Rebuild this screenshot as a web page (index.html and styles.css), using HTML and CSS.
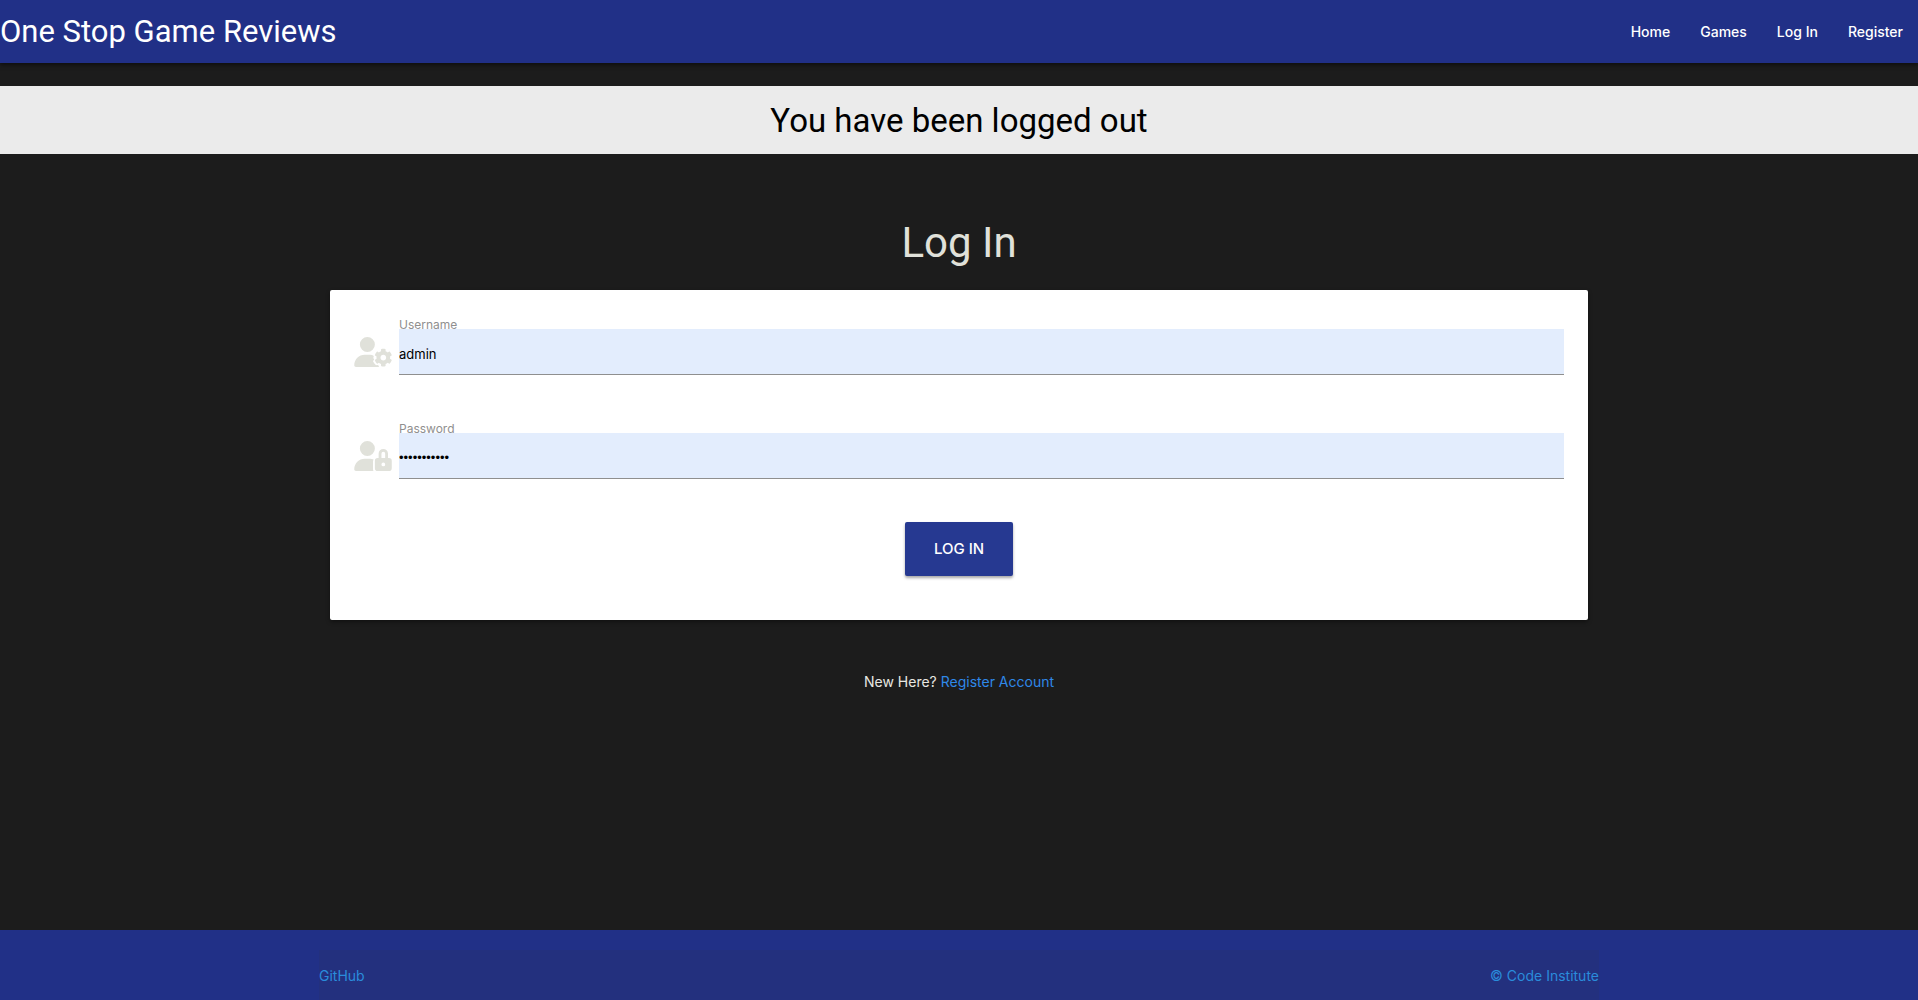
FILE: index.html
```html
<!DOCTYPE html>
<html lang="en">
<head>
<meta charset="utf-8">
<meta name="viewport" content="width=device-width, initial-scale=1">
<title>One Stop Game Reviews</title>
<link rel="stylesheet" href="styles.css">
</head>
<body>
<header class="navbar">
  <a class="brand" href="#">One Stop Game Reviews</a>
  <nav class="nav-links">
    <a href="#">Home</a>
    <a href="#">Games</a>
    <a href="#">Log In</a>
    <a href="#">Register</a>
  </nav>
</header>
<section class="flash"><h4 class="flash-text">You have been logged out</h4></section>
<main class="content">
  <h3 class="title">Log In</h3>
  <form class="card">
    <div class="field">
      <svg class="icon" viewBox="0 0 640 512" aria-hidden="true"><path d="M224 256A128 128 0 1 0 224 0a128 128 0 1 0 0 256zm-45.700 48C79.800 304 0 383.800 0 482.300C0 498.700 13.300 512 29.700 512H412C422 508 425 500 420 490L395 478C375 485 362 475 350 460C335 440 320 425 322 410C325 400 336 395 342 386C325 370 322 350 335 325C316 311 293 304 269.700 304z"/><path fill-rule="evenodd" d="M610.500 373.300c2.600-14.100 2.600-28.500 0-42.600l25.800-14.900c3-1.700 4.300-5.200 3.300-8.500-6.700-21.600-18.200-41.200-33.200-57.400-2.300-2.500-6-3.100-9-1.400l-25.800 14.900c-10.900-9.300-23.400-16.500-36.900-21.300v-29.800c0-3.400-2.400-6.400-5.700-7.100-22.300-5-45-4.800-66.200 0-3.300.7-5.700 3.700-5.700 7.100v29.800c-13.500 4.800-26 12-36.900 21.300l-25.800-14.900c-2.900-1.700-6.700-1.100-9 1.400-15 16.200-26.500 35.800-33.200 57.400-1 3.300.4 6.800 3.300 8.500l25.800 14.900c-2.600 14.100-2.600 28.500 0 42.600l-25.800 14.900c-3 1.700-4.300 5.200-3.300 8.500 6.700 21.600 18.200 41.100 33.200 57.400 2.300 2.500 6 3.100 9 1.400l25.800-14.900c10.900 9.300 23.400 16.500 36.900 21.300v29.800c0 3.400 2.400 6.400 5.700 7.100 22.300 5 45 4.800 66.200 0 3.300-.7 5.700-3.700 5.700-7.100v-29.800c13.500-4.800 26-12 36.900-21.300l25.800 14.900c2.900 1.700 6.700 1.100 9-1.400 15-16.200 26.500-35.800 33.200-57.400 1-3.300-.4-6.800-3.300-8.500l-25.800-14.900zM496 400.500c-26.800 0-48.500-21.800-48.500-48.500s21.800-48.500 48.500-48.500 48.500 21.800 48.500 48.500-21.700 48.500-48.500 48.500z"/></svg>
      <div class="control">
        <label for="username">Username</label>
        <input id="username" type="text" value="admin" autocomplete="username">
      </div>
    </div>
    <div class="field">
      <svg class="icon" viewBox="0 0 640 512" aria-hidden="true"><path d="M224 256A128 128 0 1 0 224 0a128 128 0 1 0 0 256zm-45.700 48C79.800 304 0 383.800 0 482.300C0 498.700 13.300 512 29.700 512H329c-6-9-9-20-9-32V352c0-16 4-28 10-38-19-6-39-10-60-10z"/><path fill-rule="evenodd" d="M592 288h-16v-72a80 80 0 0 0-160 0v72h-16a48 48 0 0 0-48 48v128a48 48 0 0 0 48 48h192a48 48 0 0 0 48-48V336a48 48 0 0 0-48-48zM496 432a32 32 0 1 1 32-32 32 32 0 0 1-32 32zm32-144h-64v-72a32 32 0 0 1 64 0z"/></svg>
      <div class="control">
        <label for="password">Password</label>
        <input id="password" class="secret" type="password" value="password123" autocomplete="current-password">
      </div>
    </div>
    <button class="submit" type="button">LOG IN</button>
  </form>
  <p class="register">New Here? <a href="#">Register Account</a></p>
</main>
<footer class="footer">
  <div class="footer-bar">
    <a href="#">GitHub</a>
    <a href="#">© Code Institute</a>
  </div>
</footer>
</body>
</html>
```
FILE: styles.css
```css
* { box-sizing: border-box; }
body {
  margin: 0;
  min-height: 100vh;
  display: flex;
  flex-direction: column;
  background: #1c1c1c;
  color: #e0e1da;
  font-family: Inter, "Liberation Sans", sans-serif;
  font-size: 14px;
  line-height: 24px;
}
a { color: inherit; text-decoration: none; }
h3, h4, p { margin: 0; font-weight: 400; }

.navbar {
  display: flex;
  align-items: center;
  justify-content: space-between;
  height: 63px;
  background: #213087;
  color: #fff;
  box-shadow: 0 2px 4px rgba(0, 0, 0, .5);
}
.brand, .flash-text, .title { font-family: Roboto, Inter, sans-serif; }
.brand { font-size: 31px; line-height: 62px; }
.nav-links { display: flex; }
.nav-links a { padding: 0 15px; line-height: 64px; font-weight: 500; }

.flash {
  margin-top: 23px;
  padding: 15px 0 13px;
  background: #ebebeb;
  color: #000;
  text-align: center;
}
.flash-text { font-size: 33px; line-height: 40px; }

.content {
  flex: 1;
  width: calc(100% - 22px);
  max-width: 1258px;
  margin: 0 auto;
  padding-top: 64px;
  text-align: center;
}
.title { font-size: 42px; line-height: 50px; }
.card {
  margin-top: 22px;
  padding: 39px 24px 44px;
  border-radius: 2px;
  background: #fff;
  box-shadow: 0 2px 4px rgba(0, 0, 0, .4);
}
.field { display: flex; gap: 7px; margin-bottom: 58px; }
.icon { flex: none; width: 38px; height: 30px; margin-top: 8px; fill: #e0e1da; }
.control { position: relative; flex: 1; }
.control label {
  position: absolute;
  left: 0;
  bottom: 100%;
  margin-bottom: -4px;
  color: #8f8f8f;
  font-size: 12px;
  line-height: 16px;
}
.control input {
  display: block;
  width: 100%;
  height: 46px;
  padding: 4px 0 0;
  border: 0;
  border-bottom: 1px solid #8f8f8f;
  border-radius: 0;
  outline: 0;
  background: #e3edfd;
  color: #000;
  font-family: inherit;
  font-size: 13px;
}
.control .secret { font-family: "Liberation Sans", sans-serif; }
.submit {
  height: 54px;
  margin-top: -15px;
  padding: 0 29px;
  border: 0;
  border-radius: 2px;
  background: #263991;
  color: #fff;
  font: 500 15px/54px Inter, "Liberation Sans", sans-serif;
  box-shadow: 0 2px 3px rgba(0, 0, 0, .35);
}
.register { margin-top: 50px; color: #e8e8e2; }
.register a { color: #2f88e8; }

.footer { padding-top: 20px; background: #213087; }
.footer-bar {
  display: flex;
  justify-content: space-between;
  width: 100%;
  max-width: 1280px;
  height: 50px;
  margin: 0 auto;
  background: #23307e;
  color: #2a8cdb;
  line-height: 52px;
}
```
